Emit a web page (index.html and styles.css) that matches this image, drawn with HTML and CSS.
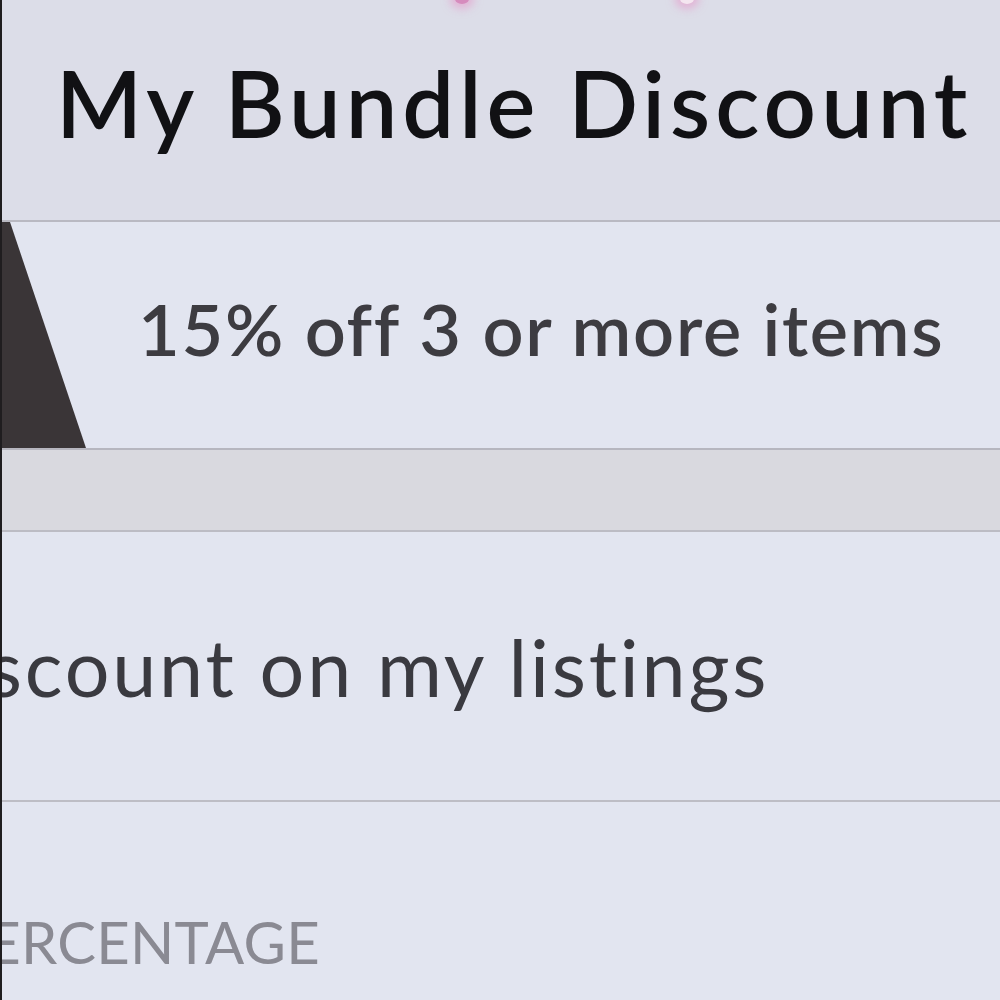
FILE: index.html
```html
<!DOCTYPE html>
<html lang="en">
<head>
    <meta charset="UTF-8">
    <title>My Bundle Discount</title>
    <link rel="stylesheet" href="styles.css">
</head>
<body>
    <div class="screen">
        <div class="nav">
            <span class="glow glow-left"></span>
            <span class="glow glow-right"></span>
            <h1>My Bundle Discount</h1>
        </div>
        <div class="row promo">
            <div class="tab-shape"></div>
            <span class="promo-text">15% off 3 or more items</span>
        </div>
        <div class="spacer"></div>
        <div class="row toggle">
            <span class="toggle-text">Discount on my listings</span>
        </div>
        <div class="row field">
            <span class="field-label">PERCENTAGE</span>
        </div>
    </div>
</body>
</html>
```

FILE: styles.css
```css
body {
    margin: 0;
    font-family: "Lato", "Open Sans", sans-serif;
    font-variant-ligatures: none;
    background: #e2e5f0;
}
.screen {
    width: 1000px;
    height: 1000px;
    overflow: hidden;
    box-sizing: border-box;
    border-left: 2px solid #1f1d1f;
    background: #e2e5f0;
}
.nav {
    position: relative;
    height: 220px;
    background: #dcdde8;
    border-bottom: 2px solid #b9b9c2;
    display: flex;
    align-items: center;
}
.nav h1 {
    margin: 0 0 0 54px;
    font-size: 92px;
    font-weight: 600;
    letter-spacing: 5px;
    color: #111114;
    line-height: 1;
    position: relative;
    top: -7px;
}
.glow {
    position: absolute;
    top: -6px;
    width: 14px;
    height: 10px;
    border-radius: 50%;
    background: #d68bbd;
    box-shadow: 0 0 8px 5px rgba(230, 150, 200, 0.6);
}
.glow-left { left: 453px; }
.glow-right { left: 678px; background: #f4e6f0; }
.row {
    display: flex;
    align-items: center;
    background: #e2e5f0;
}
.promo {
    position: relative;
    height: 226px;
    border-bottom: 2px solid #b6b6bf;
}
.tab-shape {
    position: absolute;
    left: 0;
    top: 0;
    width: 84px;
    height: 226px;
    background: #3a3537;
    clip-path: polygon(0 0, 8px 0, 84px 100%, 0 100%);
}
.promo-text {
    margin: 0 0 14px 136px;
    font-size: 72px;
    font-weight: 600;
    letter-spacing: 1.7px;
    color: #3d3c41;
}
.spacer {
    height: 80px;
    background: #d9d9df;
    border-bottom: 2px solid #bcbcc4;
}
.toggle {
    height: 268px;
    border-bottom: 2px solid #bdbdc5;
}
.toggle-text {
    margin-left: -98px;
    font-size: 79px;
    font-weight: 400;
    letter-spacing: 2.8px;
    color: #3a3a40;
    white-space: nowrap;
}
.field {
    height: 198px;
    align-items: flex-start;
}
.field-label {
    margin-top: 105px;
    margin-left: -50px;
    font-size: 58px;
    letter-spacing: 0.3px;
    color: #8a8a93;
    white-space: nowrap;
}
```
